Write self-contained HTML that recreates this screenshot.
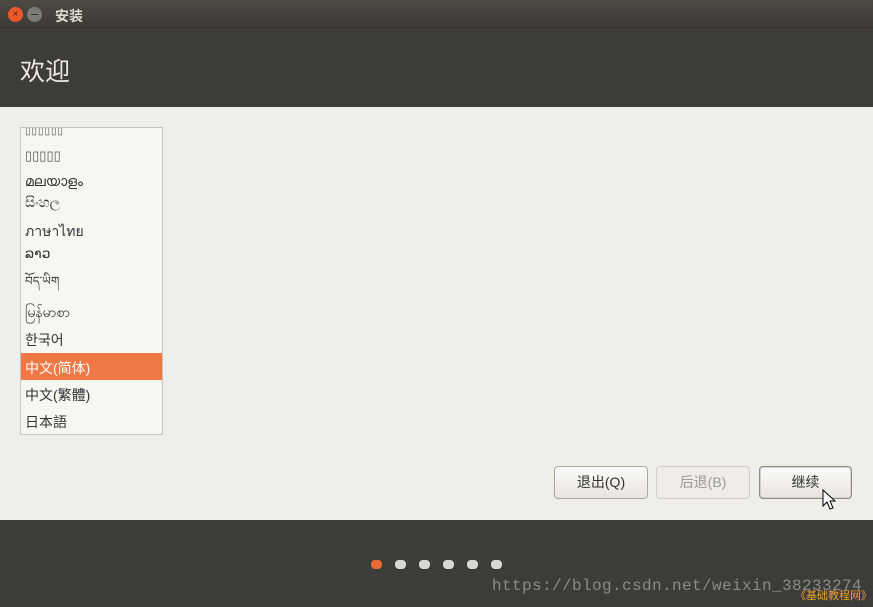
<!DOCTYPE html>
<html><head><meta charset="utf-8"><style>
*{margin:0;padding:0;box-sizing:border-box}
body{width:873px;height:607px;overflow:hidden;background:#eeeeea;font-family:"Liberation Sans","Noto Sans CJK SC",sans-serif;position:relative}
.tb{position:absolute;left:0;top:0;width:873px;height:28px;background:linear-gradient(#4a4944,#3c3b37);border-bottom:1px solid #33322f}
.hd{position:absolute;left:0;top:28px;width:873px;height:79px;background:#3c3c39}
.ft{position:absolute;left:0;top:520px;width:873px;height:87px;background:#3c3c3a}
.list{position:absolute;left:20px;top:127px;width:143px;height:308px;background:#f6f6f3;border:1px solid #c4c4c0;overflow:hidden}
.it{position:absolute;left:4px;font-size:14px;color:#333}
.sel{position:absolute;left:0;top:225px;width:141px;height:27px;background:#f07746}
.btn{position:absolute;top:466px;height:33px;border:1px solid #a9a8a3;border-radius:4px;background:linear-gradient(#fbfbfa,#e6e5e1);font-size:14px;color:#333;text-align:center;line-height:31px}
.dot{position:absolute;top:560px;width:11px;height:9px;border-radius:4px;background:#d8d8d5}
</style></head><body>
<div class="tb">
<div style="position:absolute;left:8px;top:7px;width:15px;height:15px;border-radius:50%;background:#e9592a;color:#5a1a08;font-size:10px;text-align:center;line-height:15px">×</div>
<div style="position:absolute;left:27px;top:7px;width:15px;height:15px;border-radius:50%;background:#7a7a76;"><div style="position:absolute;left:4px;top:7px;width:7px;height:1px;background:#333"></div></div>
<div style="position:absolute;left:55px;top:6px;font-size:14px;color:#dfdbd2;font-weight:bold">安装</div>
</div>
<div class="hd"><div style="position:absolute;left:20px;top:24px;font-size:25px;color:#eae8e2">欢迎</div></div>
<div class="list">
<div class="it" style="top:-2px;font-size:10px;letter-spacing:1px;color:#555">▯▯▯▯▯▯</div>
<div class="it" style="top:20px;font-size:13px;color:#555">▯▯▯▯▯</div>
<div class="it" style="top:45px">മലയാളം</div>
<div class="it" style="top:66px">සිංහල</div>
<div class="it" style="top:93px">ภาษาไทย</div>
<div class="it" style="top:117px">ລາວ</div>
<div class="it" style="top:140px;font-size:12px">བོད་ཡིག</div>
<div class="it" style="top:175px">မြန်မာစာ</div>
<div class="it" style="top:202px">한국어</div>
<div class="sel"></div>
<div class="it" style="top:230px;color:#fff">中文(简体)</div>
<div class="it" style="top:257px">中文(繁體)</div>
<div class="it" style="top:284px">日本語</div>
</div>
<div class="btn" style="left:554px;width:94px">退出(Q)</div>
<div class="btn" style="left:656px;width:94px;color:#999;background:#eeeceb;border-color:#cfcdca">后退(B)</div>
<div class="btn" style="left:759px;width:93px;border-color:#8d8c87;box-shadow:0 0 0 1px #d0cfcb inset">继续</div>
<svg style="position:absolute;left:822px;top:489px" width="14" height="22"><path d="M1 1 L1 17 L5 13 L8 20 L11 19 L8 12 L13 12 Z" fill="#fff" stroke="#000" stroke-width="1"/></svg>
<div class="ft"></div>
<div class="dot" style="left:371px;background:#e86a35"></div>
<div class="dot" style="left:395px"></div>
<div class="dot" style="left:419px"></div>
<div class="dot" style="left:443px"></div>
<div class="dot" style="left:467px"></div>
<div class="dot" style="left:491px"></div>
<div style="position:absolute;left:492px;top:577px;font-family:'Liberation Mono',monospace;font-size:16px;letter-spacing:0.4px;color:#8a8a86;white-space:nowrap">https://blog.csdn.net/weixin_38233274</div>
<div style="position:absolute;left:795px;top:587px;font-size:11px;color:#f0a030;white-space:nowrap">《基础教程网》</div>
</body></html>
